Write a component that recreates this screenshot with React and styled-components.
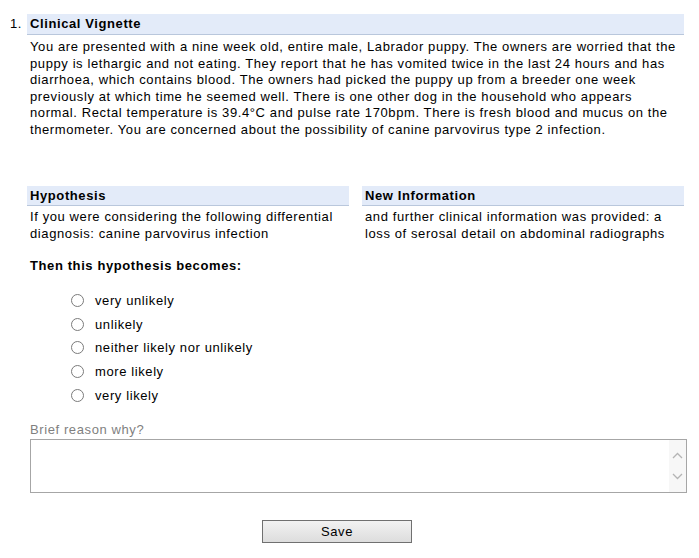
import React from "react";
import styled, { createGlobalStyle } from "styled-components";

const GlobalStyle = createGlobalStyle`
  html, body {
    margin: 0;
    padding: 0;
    background: #ffffff;
  }
  body {
    font-family: "Liberation Sans", Arial, sans-serif;
    font-size: 13px;
    letter-spacing: 0.6px;
    color: #000000;
  }
`;

const OPTIONS = [
  "very unlikely",
  "unlikely",
  "neither likely nor unlikely",
  "more likely",
  "very likely",
];

const App = () => {
  return (
    <>
      <GlobalStyle />
      <Page>
        <Number>1.</Number>
        <Content>
          <Bar>Clinical Vignette</Bar>
          <Vignette>
            You are presented with a nine week old, entire male, Labrador puppy. The owners are
            worried that the puppy is lethargic and not eating. They report that he has vomited
            twice in the last 24 hours and has diarrhoea, which contains blood. The owners had
            picked the puppy up from a breeder one week previously at which time he seemed well.
            There is one other dog in the household who appears normal. Rectal temperature is
            39.4°C and pulse rate 170bpm. There is fresh blood and mucus on the thermometer. You
            are concerned about the possibility of canine parvovirus type 2 infection.
          </Vignette>

          <Columns>
            <div>
              <Bar small>Hypothesis</Bar>
              <ColText>
                If you were considering the following differential diagnosis: canine parvovirus
                infection
              </ColText>
            </div>
            <div>
              <Bar small>New Information</Bar>
              <ColText>
                and further clinical information was provided: a loss of serosal detail on
                abdominal radiographs
              </ColText>
            </div>
          </Columns>

          <Prompt>Then this hypothesis becomes:</Prompt>

          <Options>
            {OPTIONS.map((opt) => (
              <Option key={opt}>
                <Radio type="radio" name="likelihood" value={opt} />
                <span>{opt}</span>
              </Option>
            ))}
          </Options>

          <ReasonLabel>Brief reason why?</ReasonLabel>
          <ReasonBox>
            <ReasonInput />
            <FakeScroll>
              <svg width="11" height="7" viewBox="0 0 11 7">
                <path d="M1 6 L5.5 1.5 L10 6" fill="none" stroke="#b4b4b4" strokeWidth="1.3" />
              </svg>
              <svg width="11" height="7" viewBox="0 0 11 7">
                <path d="M1 1 L5.5 5.5 L10 1" fill="none" stroke="#b4b4b4" strokeWidth="1.3" />
              </svg>
            </FakeScroll>
          </ReasonBox>

          <ButtonRow>
            <SaveButton type="button">Save</SaveButton>
          </ButtonRow>
        </Content>
      </Page>
    </>
  );
};

const Page = styled.div`
  display: flex;
  padding: 14px 15px 0 10px;
  width: 699px;
  box-sizing: border-box;
`;

const Number = styled.div`
  width: 17px;
  flex: none;
  line-height: 20px;
`;

const Content = styled.div`
  flex: 1;
  min-width: 0;
`;

const Bar = styled.div`
  background: #e3ebf9;
  border-bottom: 1px solid #b9c7dc;
  font-weight: bold;
  height: ${(p) => (p.small ? "19px" : "20px")};
  line-height: ${(p) => (p.small ? "19px" : "20px")};
  padding-left: 3px;
`;

const Vignette = styled.p`
  margin: 4px 0 0;
  padding: 0 3px;
  line-height: 16.6px;
`;

const Columns = styled.div`
  display: grid;
  grid-template-columns: 1fr 1fr;
  column-gap: 13px;
  margin-top: 47px;
`;

const ColText = styled.p`
  margin: 2px 0 0;
  padding-left: 3px;
  line-height: 17px;
`;

const Prompt = styled.div`
  margin-top: 15px;
  padding-left: 3px;
  font-weight: bold;
  line-height: 17px;
`;

const Options = styled.div`
  display: flex;
  flex-direction: column;
  margin-top: 15px;
  padding-left: 44px;
`;

const Option = styled.label`
  display: flex;
  align-items: center;
  height: 23.75px;
  gap: 11px;
`;

const Radio = styled.input`
  appearance: none;
  margin: 0;
  width: 13px;
  height: 13px;
  border: 1px solid #7b7b7b;
  border-radius: 50%;
  background: #ffffff;
  box-sizing: border-box;
  flex: none;
`;

const ReasonLabel = styled.div`
  margin-top: 15px;
  padding-left: 3px;
  color: #7f7f7f;
  line-height: 15px;
`;

const ReasonBox = styled.div`
  display: flex;
  margin: 2px -3px 0 3px;
  height: 54px;
  border: 1px solid #a6a6a6;
  box-sizing: border-box;
  background: #ffffff;
`;

const ReasonInput = styled.textarea`
  flex: 1;
  border: none;
  outline: none;
  resize: none;
  margin: 0;
  padding: 2px;
  font: inherit;
`;

const FakeScroll = styled.div`
  width: 17px;
  flex: none;
  background: #f7f7f7;
  display: flex;
  flex-direction: column;
  align-items: center;
  justify-content: center;
  gap: 14px;
`;

const ButtonRow = styled.div`
  display: flex;
  margin-top: 27px;
  padding-left: 235px;
`;

const SaveButton = styled.button`
  width: 150px;
  height: 23px;
  border: 1px solid #707070;
  background: linear-gradient(#f2f2f2, #dddddd);
  font-family: "Liberation Sans", Arial, sans-serif;
  font-size: 13px;
  letter-spacing: 0.6px;
  color: #000000;
  padding: 0;
`;

export default App;
